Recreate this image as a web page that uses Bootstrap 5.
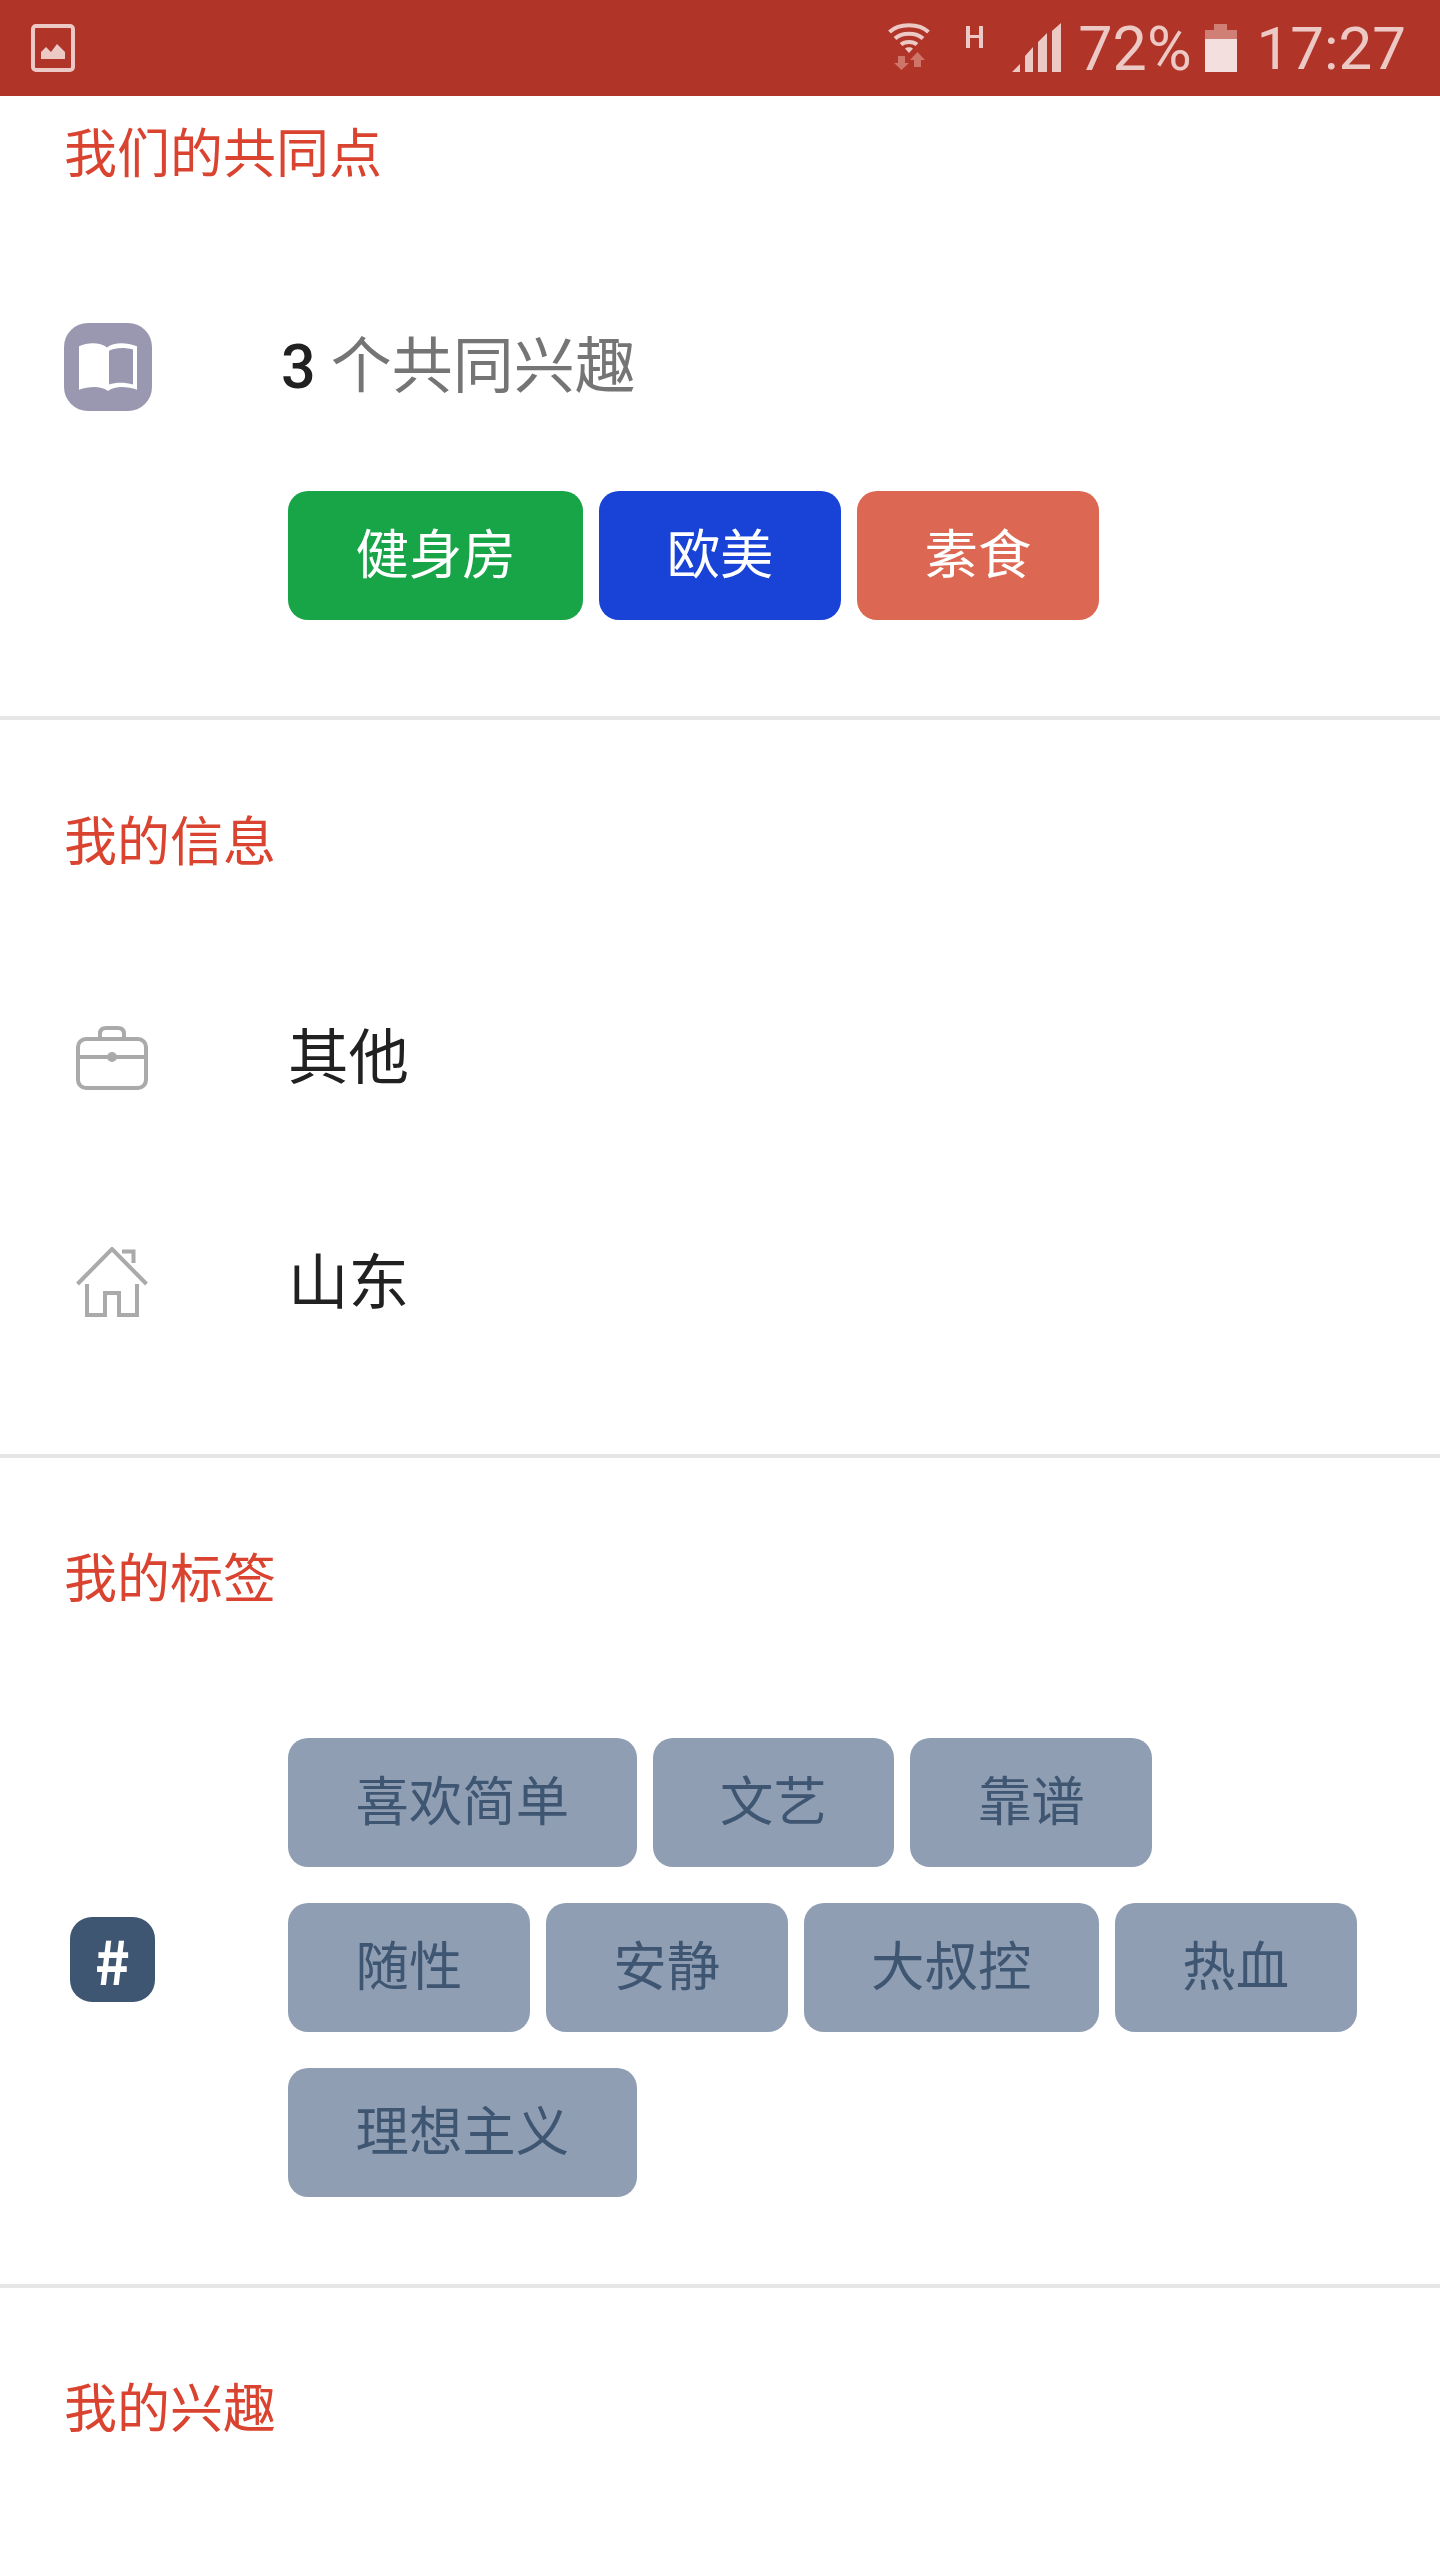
<!DOCTYPE html>
<html lang="zh-CN">
<head>
  <meta charset="UTF-8">
  <meta name="viewport" content="width=device-width, initial-scale=1.0">
  <title>我的资料</title>
  <link href="https://cdn.jsdelivr.net/npm/bootstrap@5.3.0/dist/css/bootstrap.min.css" rel="stylesheet">
  <style>
    body {
      font-family: Roboto, "Noto Sans CJK SC", sans-serif;
      color: #212121;
      background: #fff;
    }
    .status-bar {
      height: 96px;
      background: #b03428;
      color: #ecc9c5;
      font-size: 60px;
      line-height: 96px;
      padding: 0 34px 0 31px;
    }
    .status-pct { margin-left: 17px; margin-top: 2px; font-size: 61px; }
    .status-time { margin-left: 20px; margin-top: 2px; }
    .status-net { margin-right: 36px; margin-top: -5px; }
    .status-h { margin-right: 29px; margin-top: -22px; }
    .status-sig { margin-top: -2px; }
    .status-batt { margin-left: 13px; margin-top: -1px; }
    .info-block { border-bottom: 4px solid #e6e6e6; }
    .block-one { height: 624px; padding-top: 19px; }
    .block-two { height: 738px; padding-top: 83px; }
    .block-three { height: 830px; padding-top: 82px; }
    .block-four { padding-top: 82px; }
    .block-title {
      font-size: 53px;
      line-height: 80px;
      color: #d9432f;
      padding-left: 64px;
      margin: 0;
      font-weight: 400;
    }
    .info-row { padding-left: 64px; }
    .icon-slot { width: 224px; flex-shrink: 0; }
    .book-icon {
      width: 88px;
      height: 88px;
      border-radius: 24px;
      background: #9a98b0;
    }
    .hash-icon {
      width: 85px;
      height: 85px;
      margin-left: 6px;
      margin-bottom: 17px;
      border-radius: 22px;
      background: #3f5672;
      color: #fff;
      font-family: "Noto Sans CJK SC", sans-serif;
      font-weight: 700;
      font-size: 60px;
      line-height: 1;
    }
    .line-icon { margin-left: 12px; display: block; }
    .row-text { font-size: 60.5px; line-height: 88px; }
    .job-row .row-text { margin-top: 2px; }
    .home-row .row-text { margin-top: 3px; }
    .count-row { margin-top: 128px; }
    .count-text { margin-left: -7px; color: #757575; font-size: 61px; }
    .count-text b { font-weight: 500; color: #212121; }
    .job-row { margin-top: 131px; height: 88px; }
    .home-row { margin-top: 136px; height: 88px; }
    .tag-row { margin-top: 118px; }
    .chip-wrap { gap: 36px 16px; }
    .chip {
      height: 129px;
      padding: 0 67.5px;
      border-radius: 20px;
      font-size: 53.4px;
      line-height: 129px;
      color: #fff;
    }
    .chip-green { background: #18a548; }
    .chip-blue { background: #1843d6; }
    .chip-red { background: #dc6753; }
    .chip-grey { background: #8f9eb2; color: #3f5672; }
    .common-chips { margin: 80px 0 0 288px; }
    .tag-chips { width: 1090px; }
  </style>
</head>
<body>
  <!-- status bar -->
  <div class="status-bar d-flex align-items-center">
    <svg width="44" height="48" viewBox="0 0 44 48" fill="none">
      <rect x="2" y="2" width="40" height="44" rx="3" stroke="#ecc9c5" stroke-width="4"/>
      <path d="M10 35v-7l5-5 5 5 6-8 8 8v7z" fill="#ecc9c5"/>
    </svg>
    <div class="ms-auto status-net">
      <svg class="d-block" width="42" height="49" viewBox="0 0 42 49" fill="none">
        <g stroke="#ecc9c5" stroke-width="4">
          <path d="M1.500 11C11 2 31 2 40.500 11"/>
          <path d="M7 17.500C14 11 28 11 35 17.500"/>
          <path d="M13 23.500C17 20 25 20 29 23.500"/>
        </g>
        <path d="M17 27.500c2-1.700 6-1.700 8 0L21 32z" fill="#ecc9c5"/>
        <path d="M10 35h7v7h4l-7.500 7-7.500-7h4zM29.500 31l7.500 8h-4v7h-7v-7h-4z" fill="#cf7469"/>
      </svg>
    </div>
    <div class="status-h">
      <svg class="d-block" width="17" height="22" viewBox="0 0 17 22" fill="#ecc9c5">
        <path d="M0 0h4v9h9V0h4v22h-4V12H4v10H0z"/>
      </svg>
    </div>
    <svg class="status-sig" width="49" height="49" viewBox="0 0 49 49" fill="#ecc9c5">
      <path d="M0 49l8-8v8zM13 49V33l8-9v25zM26 49V19l9-9v39zM40 49V8l9-8v49z"/>
    </svg>
    <span class="status-pct">72%</span>
    <svg class="status-batt" width="32" height="48" viewBox="0 0 32 48">
      <path d="M9 0h13v6h10v10H0V6h9z" fill="#d07f76"/>
      <rect y="15" width="32" height="33" fill="#f3e0de"/>
    </svg>
    <span class="status-time">17:27</span>
  </div>

  <!-- 我们的共同点 -->
  <section class="info-block block-one">
    <h2 class="block-title">我们的共同点</h2>
    <div class="info-row count-row d-flex align-items-center">
      <div class="icon-slot">
        <div class="book-icon d-flex align-items-center justify-content-center">
          <svg width="60" height="50" viewBox="0 0 60 46" preserveAspectRatio="none">
            <path d="M1 4C10 0 22 0 29 5c7-5 19-5 30-1v40c-10-3-21-4-29 1-8-5-19-4-29-1z" fill="#fff"/>
            <path d="M31 8c7-3 16-3 24-1v32c-8-2-17-2-24 0z" fill="#9a98b0"/>
          </svg>
        </div>
      </div>
      <div class="row-text count-text"><b>3</b> 个共同兴趣</div>
    </div>
    <div class="common-chips chip-wrap d-flex">
      <div class="chip chip-green">健身房</div>
      <div class="chip chip-blue">欧美</div>
      <div class="chip chip-red">素食</div>
    </div>
  </section>

  <!-- 我的信息 -->
  <section class="info-block block-two">
    <h2 class="block-title">我的信息</h2>
    <div class="info-row job-row d-flex align-items-center">
      <div class="icon-slot">
        <svg class="line-icon" width="72" height="64" viewBox="0 0 72 64" fill="none" stroke="#aaa" stroke-width="4">
          <rect x="2" y="13" width="68" height="49" rx="8"/>
          <path d="M24 13V8c0-4 2-6 6-6h12c4 0 6 2 6 6v5M2 31h68"/>
          <circle cx="36" cy="31" r="3" fill="#aaa"/>
        </svg>
      </div>
      <div class="row-text">其他</div>
    </div>
    <div class="info-row home-row d-flex align-items-center">
      <div class="icon-slot">
        <svg class="line-icon" width="72" height="70" viewBox="0 0 72 70" fill="none" stroke="#aaa" stroke-width="4">
          <path d="M1.500 37L36 2l34.500 35"/>
          <path d="M46 4.500h11.500V16"/>
          <path d="M11 37v31h18V46h14v22h18V37"/>
        </svg>
      </div>
      <div class="row-text">山东</div>
    </div>
  </section>

  <!-- 我的标签 -->
  <section class="info-block block-three">
    <h2 class="block-title">我的标签</h2>
    <div class="info-row tag-row d-flex align-items-center">
      <div class="icon-slot">
        <div class="hash-icon d-flex align-items-center justify-content-center">#</div>
      </div>
      <div class="tag-chips chip-wrap d-flex flex-wrap">
        <div class="chip chip-grey">喜欢简单</div>
        <div class="chip chip-grey">文艺</div>
        <div class="chip chip-grey">靠谱</div>
        <div class="chip chip-grey">随性</div>
        <div class="chip chip-grey">安静</div>
        <div class="chip chip-grey">大叔控</div>
        <div class="chip chip-grey">热血</div>
        <div class="chip chip-grey">理想主义</div>
      </div>
    </div>
  </section>

  <!-- 我的兴趣 -->
  <section class="block-four">
    <h2 class="block-title">我的兴趣</h2>
  </section>

  <script src="https://cdn.jsdelivr.net/npm/bootstrap@5.3.0/dist/js/bootstrap.bundle.min.js"></script>
</body>
</html>
